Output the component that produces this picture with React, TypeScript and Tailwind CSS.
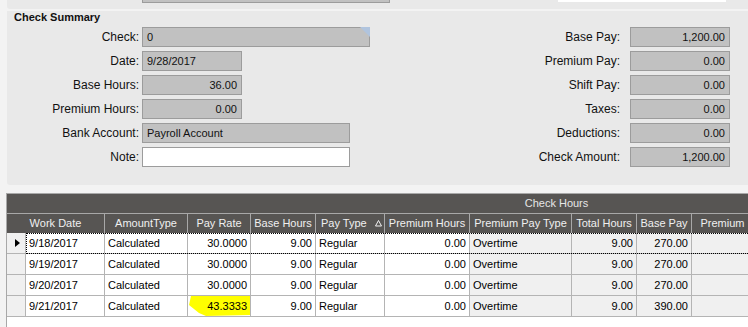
import React from "react";

const cols = [
  { key: "date", w: 79, align: "left", bg: "bg-white" },
  { key: "amt", w: 83, align: "left", bg: "bg-white" },
  { key: "rate", w: 63, align: "right", bg: "bg-white" },
  { key: "bh", w: 65, align: "right", bg: "bg-white" },
  { key: "pt", w: 69, align: "left", bg: "bg-white" },
  { key: "ph", w: 85, align: "right", bg: "bg-white" },
  { key: "ppt", w: 102, align: "left", bg: "bg-[#f0f0f0]" },
  { key: "th", w: 65, align: "right", bg: "bg-[#f0f0f0]" },
  { key: "bp", w: 55, align: "right", bg: "bg-[#f0f0f0]" },
  { key: "pr", w: 62, align: "right", bg: "bg-[#f0f0f0]" },
];

const rows = [
  ["9/18/2017", "Calculated", "30.0000", "9.00", "Regular", "0.00", "Overtime", "9.00", "270.00", ""],
  ["9/19/2017", "Calculated", "30.0000", "9.00", "Regular", "0.00", "Overtime", "9.00", "270.00", ""],
  ["9/20/2017", "Calculated", "30.0000", "9.00", "Regular", "0.00", "Overtime", "9.00", "270.00", ""],
  ["9/21/2017", "Calculated", "43.3333", "9.00", "Regular", "0.00", "Overtime", "9.00", "390.00", ""],
];

function Field({
  w,
  value = "",
  align = "left",
  white = false,
  corner = false,
}: {
  w: number;
  value?: string;
  align?: "left" | "right";
  white?: boolean;
  corner?: boolean;
}) {
  return (
    <div
      style={{ width: w }}
      className={`relative h-[20px] border border-[#9c9c9c] flex items-center text-[11px] text-[#111] px-[4px] ${
        white ? "bg-white" : "bg-[#c1c1c1]"
      } ${align === "right" ? "justify-end pr-[4px]" : "justify-start"}`}
    >
      {value}
      {corner && (
        <svg className="absolute -top-[1px] -right-[1px]" width="10" height="10" viewBox="0 0 10 10">
          <polygon points="0,0 10,0 10,10" fill="#b0c4de" />
        </svg>
      )}
    </div>
  );
}

function Label({ children }: { children: React.ReactNode }) {
  return <div className="h-[20px] flex items-center justify-end text-[12px] text-[#111]">{children}</div>;
}

export default function App() {
  return (
    <div className="w-[748px] h-[327px] overflow-hidden bg-[#f3f3f3] font-['Liberation_Sans',Arial,sans-serif] flex flex-col">
      {/* top panel remnant */}
      <div className="ml-[7px] h-[9px] bg-[#e9e9e9] rounded-bl-[3px] overflow-hidden flex items-end shrink-0">
        <div className="ml-[135px] w-[248px] h-[20px] border border-[#9c9c9c] bg-[#c1c1c1] mb-[6px]" />
        <div className="ml-[168px] w-[168px] h-[20px] bg-white mb-[7px]" />
      </div>

      {/* Check Summary panel */}
      <div className="mt-[2px] ml-[7px] h-[174px] bg-[#e9e9e9] rounded-bl-[3px] shrink-0 pt-[1px]">
        <div className="pl-[7px] text-[11px] leading-[11px] font-bold text-[#111] h-[15px]">Check Summary</div>
        <div className="flex">
          <div className="grid grid-cols-[132px_auto] gap-x-[3px] gap-y-[4px] items-center">
            <Label>Check:</Label>
            <Field w={228} value="0" corner />
            <Label>Date:</Label>
            <Field w={100} value="9/28/2017" />
            <Label>Base Hours:</Label>
            <Field w={100} value="36.00" align="right" />
            <Label>Premium Hours:</Label>
            <Field w={100} value="0.00" align="right" />
            <Label>Bank Account:</Label>
            <Field w={208} value="Payroll Account" />
            <Label>Note:</Label>
            <Field w={208} white />
          </div>
          <div className="ml-auto mr-[18px] grid grid-cols-[auto_auto] gap-x-[10px] gap-y-[4px] items-center">
            <Label>Base Pay:</Label>
            <Field w={100} value="1,200.00" align="right" />
            <Label>Premium Pay:</Label>
            <Field w={100} value="0.00" align="right" />
            <Label>Shift Pay:</Label>
            <Field w={100} value="0.00" align="right" />
            <Label>Taxes:</Label>
            <Field w={100} value="0.00" align="right" />
            <Label>Deductions:</Label>
            <Field w={100} value="0.00" align="right" />
            <Label>Check Amount:</Label>
            <Field w={100} value="1,200.00" align="right" />
          </div>
        </div>
      </div>

      {/* Grid */}
      <div className="mt-[8px] ml-[6px] w-[1100px] flex-1 bg-white border-l border-t border-[#a8a8a8] shrink-0">
        <div className="h-[19px] bg-[#575553] flex items-center justify-center text-[11px] text-[#e6e6e6]">
          Check Hours
        </div>
        <div className="h-[20px] bg-[#575553] border-t border-[#a8a8a8] flex text-[11px] text-[#f0f0f0]">
          {[
            ["Work Date", 98],
            ["AmountType", 83],
            ["Pay Rate", 63],
            ["Base Hours", 65],
            ["Pay Type", 69],
            ["Premium Hours", 85],
            ["Premium Pay Type", 102],
            ["Total Hours", 65],
            ["Base Pay", 55],
            ["Premium", 62],
          ].map(([t, w]) => (
            <div
              key={t as string}
              style={{ width: w as number }}
              className={`relative h-full border-r border-[#a8a8a8] flex items-center whitespace-nowrap ${
                t === "Pay Type" ? "justify-start pl-[5px]" : "justify-center"
              }`}
            >
              {t}
              {t === "Pay Type" && (
                <svg className="absolute right-[2px] top-[6px]" width="7" height="7" viewBox="0 0 7 7">
                  <polygon points="3.5,0.5 6.5,6 0.5,6" fill="none" stroke="#f0f0f0" strokeWidth="1" />
                </svg>
              )}
            </div>
          ))}
        </div>
        {rows.map((r, ri) => (
          <div key={ri} className="relative h-[21px] flex text-[11px] text-[#000]">
            <div className="w-[19px] h-full bg-[#f0f0f0] border-r border-b border-[#b4b4b4] flex items-center pl-[8px]">
              {ri === 0 && (
                <svg width="5" height="8" viewBox="0 0 5 8">
                  <polygon points="0,0 5,4 0,8" fill="#000" />
                </svg>
              )}
            </div>
            {cols.map((c, ci) => (
              <div
                key={c.key}
                style={{ width: c.w }}
                className={`relative h-full border-r border-b border-[#b4b4b4] flex items-center whitespace-nowrap ${c.bg} ${
                  c.align === "right" ? "justify-end pr-[3px]" : "justify-start pl-[3px]"
                }`}
              >
                {ri === 3 && ci === 2 && (
                  <svg className="absolute left-0 top-0" width="63" height="21" viewBox="0 0 63 21">
                    <polygon points="3,0 62,0 62,19 18,20 11,17 1,9" fill="#ffff00" />
                  </svg>
                )}
                <span className="relative">{r[ci]}</span>
              </div>
            ))}
            {ri === 0 && (
              <div className="absolute left-[19px] top-0 right-0 h-[21px] border border-dotted border-black pointer-events-none" />
            )}
          </div>
        ))}
      </div>
    </div>
  );
}
